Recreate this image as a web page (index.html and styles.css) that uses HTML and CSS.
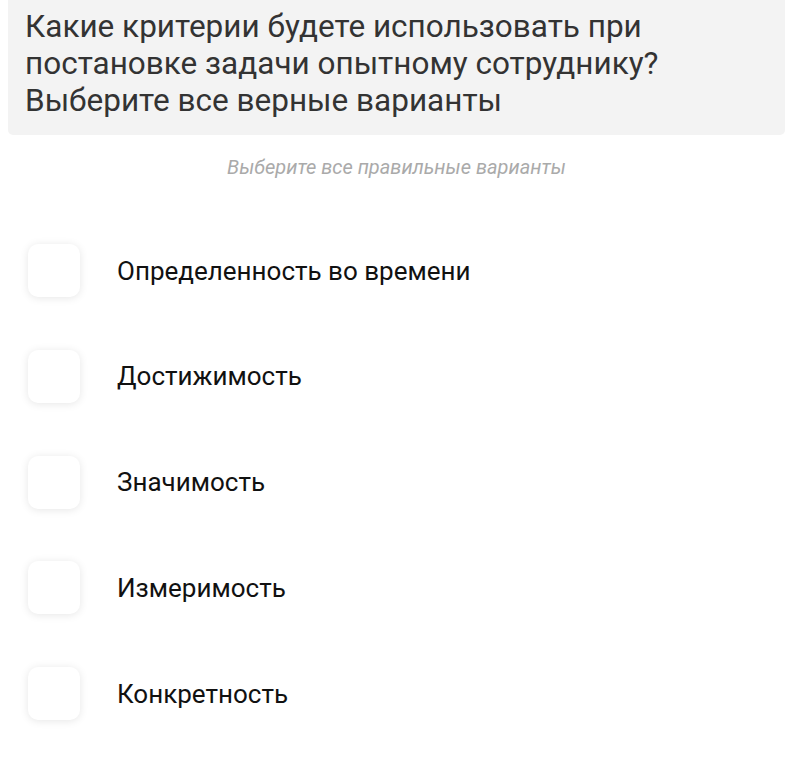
FILE: index.html
```html
<!DOCTYPE html>
<html>
<head>
    <meta charset="utf-8">
    <link rel="stylesheet" href="styles.css">
    <title>Вопрос</title>
</head>
<body>
    <div class="question">
        Какие критерии будете использовать при постановке задачи опытному сотруднику? Выберите все верные варианты
    </div>

    <div class="hint">Выберите все правильные варианты</div>

    <div class="options">
        <label class="option">
            <span class="checkbox"></span>
            <span class="option-text">Определенность во времени</span>
        </label>
        <label class="option">
            <span class="checkbox"></span>
            <span class="option-text">Достижимость</span>
        </label>
        <label class="option">
            <span class="checkbox"></span>
            <span class="option-text">Значимость</span>
        </label>
        <label class="option">
            <span class="checkbox"></span>
            <span class="option-text">Измеримость</span>
        </label>
        <label class="option">
            <span class="checkbox"></span>
            <span class="option-text">Конкретность</span>
        </label>
    </div>
</body>
</html>
```

FILE: styles.css
```css
body {
    margin: 0;
    padding: 0 8px 40px;
    background-color: #ffffff;
    font-family: Roboto, 'Noto Sans', Arial, sans-serif;
    color: #111111;
}

/* Question header */
.question {
    background-color: #f3f3f3;
    border-radius: 0 0 5px 5px;
    padding: 8px 17px 16px;
    font-size: 31.5px;
    line-height: 37px;
    color: #333333;
}

.hint {
    text-align: center;
    font-style: italic;
    font-size: 20px;
    line-height: 23px;
    color: #aaaaaa;
    margin-top: 21px;
}

/* Answer options */
.options {
    display: flex;
    flex-direction: column;
    gap: 52.75px;
    padding: 65px 0 0 20px;
}

.option {
    display: flex;
    align-items: center;
    gap: 37px;
    cursor: pointer;
}

.checkbox {
    width: 52px;
    height: 53px;
    border-radius: 10px;
    background-color: #ffffff;
    box-shadow: 0 1px 8px rgba(0, 0, 0, 0.1);
    flex-shrink: 0;
}

.option-text {
    font-size: 26px;
    color: #111111;
}
```
